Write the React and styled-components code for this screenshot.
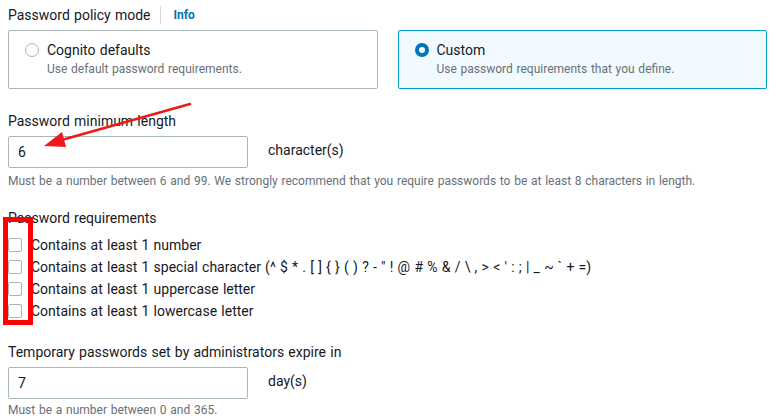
import React from "react";
import styled, { createGlobalStyle } from "styled-components";

const Global = createGlobalStyle`
  html, body { margin: 0; padding: 0; background: #ffffff; }
  body { font-family: Roboto, "Liberation Sans", Arial, sans-serif; color: #16191f; word-spacing: 0.75px; }
`;

const Page = styled.div`
  position: relative;
  width: 774px;
  height: 417px;
  overflow: hidden;
  padding: 4px 7px 0 8px;
  box-sizing: border-box;
`;

const Section = styled.div`
  display: flex;
  flex-direction: column;
  margin-top: ${(p) => p.$top || 0}px;
`;

const LabelRow = styled.div`
  display: flex;
  align-items: center;
  height: 22px;
  font-size: 14px;
  line-height: 22px;
  color: #16191f;
`;

const Divider = styled.span`
  width: 1px;
  height: 18px;
  background: #d5dbdb;
  margin: 0 12px 0 10px;
`;

const InfoLink = styled.span`
  font-size: 12px;
  font-weight: 700;
  color: #0073bb;
`;

const Tiles = styled.div`
  display: grid;
  grid-template-columns: 1fr 1fr;
  gap: 20px;
  margin-top: 4px;
`;

const Tile = styled.div`
  box-sizing: border-box;
  height: 59px;
  border: 1px solid ${(p) => (p.$selected ? "#00a1c9" : "#aab7b8")};
  background: ${(p) => (p.$selected ? "#f1faff" : "#ffffff")};
  border-radius: 2px;
  padding: 9px 16px 0 16px;
  display: grid;
  grid-template-columns: 14px 1fr;
  column-gap: 8px;
`;

const Radio = styled.span`
  box-sizing: border-box;
  width: 14px;
  height: 14px;
  border-radius: 50%;
  margin-top: 3px;
  border: ${(p) => (p.$checked ? "4px solid #0073bb" : "1px solid #aab7b8")};
  background: #ffffff;
`;

const TileText = styled.div`
  display: flex;
  flex-direction: column;
`;

const TileTitle = styled.span`
  font-size: 14px;
  line-height: 20px;
  color: #16191f;
`;

const TileDesc = styled.span`
  font-size: 12px;
  line-height: 18px;
  color: #687078;
`;

const InputRow = styled.div`
  display: flex;
  align-items: center;
  gap: 20px;
  margin-top: 4px;
`;

const Input = styled.div`
  box-sizing: border-box;
  width: 240px;
  height: 32px;
  border: 1px solid #aab7b8;
  border-radius: 2px;
  padding: 0 9px;
  display: flex;
  align-items: center;
  font-size: 14px;
  color: #16191f;
`;

const Unit = styled.span`
  font-size: 14px;
  color: #16191f;
  margin-top: -4px;
`;

const Help = styled.div`
  font-size: 12px;
  line-height: 16px;
  color: #687078;
  margin-top: ${(p) => p.$gap ?? 5}px;
`;

const Checks = styled.div`
  display: flex;
  flex-direction: column;
  margin-top: 5px;
`;

const CheckRow = styled.div`
  display: flex;
  align-items: center;
  height: 22px;
  font-size: 14px;
  color: #16191f;
`;

const Box = styled.span`
  box-sizing: border-box;
  width: 14px;
  height: 14px;
  border: 1px solid #aab7b8;
  border-radius: 2px;
  background: #fff;
  margin: 0 9px 0 0;
  flex: none;
`;

const Highlight = styled.div`
  position: absolute;
  left: 3px;
  top: 217px;
  width: 30px;
  height: 108px;
  box-sizing: border-box;
  border: 5px solid #ff0000;
  pointer-events: none;
`;

const Arrow = styled.svg`
  position: absolute;
  left: 0;
  top: 0;
  pointer-events: none;
`;

const reqs = [
  "Contains at least 1 number",
  "Contains at least 1 special character (^ $ * . [ ] { } ( ) ? - \" ! @ # % & / \\ , > < ' : ; | _ ~ ` + =)",
  "Contains at least 1 uppercase letter",
  "Contains at least 1 lowercase letter",
];

export default function App() {
  return (
    <>
      <Global />
      <Page>
        <Section>
          <LabelRow>
            Password policy mode
            <Divider />
            <InfoLink>Info</InfoLink>
          </LabelRow>
          <Tiles>
            <Tile>
              <Radio />
              <TileText>
                <TileTitle>Cognito defaults</TileTitle>
                <TileDesc>Use default password requirements.</TileDesc>
              </TileText>
            </Tile>
            <Tile $selected>
              <Radio $checked />
              <TileText>
                <TileTitle>Custom</TileTitle>
                <TileDesc>Use password requirements that you define.</TileDesc>
              </TileText>
            </Tile>
          </Tiles>
        </Section>

        <Section $top={21}>
          <LabelRow>Password minimum length</LabelRow>
          <InputRow>
            <Input>6</Input>
            <Unit>character(s)</Unit>
          </InputRow>
          <Help>
            Must be a number between 6 and 99. We strongly recommend that you require passwords to be at least 8 characters in length.
          </Help>
        </Section>

        <Section $top={18}>
          <LabelRow>Password requirements</LabelRow>
          <Checks>
            {reqs.map((r) => (
              <CheckRow key={r}>
                <Box />
                {r}
              </CheckRow>
            ))}
          </Checks>
        </Section>

        <Section $top={19}>
          <LabelRow>Temporary passwords set by administrators expire in</LabelRow>
          <InputRow>
            <Input>7</Input>
            <Unit>day(s)</Unit>
          </InputRow>
          <Help $gap={3}>Must be a number between 0 and 365.</Help>
        </Section>

        <Highlight />
        <Arrow width="774" height="417" viewBox="0 0 774 417">
          <line x1="190" y1="104" x2="58" y2="141" stroke="#f01818" strokeWidth="2.5" strokeLinecap="round" />
          <polygon points="44,146 62,132 66,147" fill="#f01818" />
        </Arrow>
      </Page>
    </>
  );
}
